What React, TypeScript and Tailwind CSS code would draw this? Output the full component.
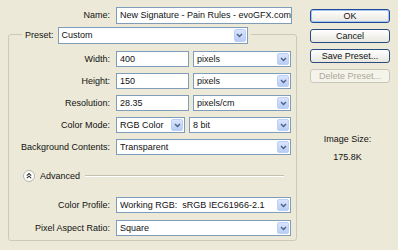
import React from 'react';

const font = { fontFamily: '"Liberation Sans", Arial, sans-serif' };

const Chevron = () => (
  <div className="w-[12px] my-[1px] mr-[1px] rounded-[2px] border border-[#bcd0f7] bg-gradient-to-b from-[#dae5fd] to-[#b8ccf5] flex items-center justify-center">
    <svg width="7" height="5" viewBox="0 0 7 5">
      <path d="M1 1 L3.5 3.5 L6 1" fill="none" stroke="#4d6185" strokeWidth="1.4" />
    </svg>
  </div>
);

const Select = ({ value, w, h = 'h-[16px]' }: { value: string; w: string; h?: string }) => (
  <div className={`${w} ${h} flex bg-white border border-[#7f9db9]`}>
    <span className="flex-1 pl-[3px] flex items-center whitespace-pre overflow-hidden">{value}</span>
    <Chevron />
  </div>
);

const Input = ({ value, w }: { value: string; w: string }) => (
  <div className={`${w} h-[16px] flex items-center pl-[3px] bg-white border border-[#7f9db9]`}>{value}</div>
);

const Row = ({ label, children, mt = 'mt-[6px]' }: { label: string; children: React.ReactNode; mt?: string }) => (
  <div className={`flex items-center ${mt}`}>
    <span className="w-[101px] text-right whitespace-nowrap">{label}</span>
    <div className="ml-[6px] flex gap-[4px]">{children}</div>
  </div>
);

const Button = ({ label, primary, disabled }: { label: string; primary?: boolean; disabled?: boolean }) => (
  <div
    className={`w-[80px] h-[14px] rounded-[3px] border flex items-center justify-center ${
      disabled
        ? 'border-[#c9c7ba] bg-[#f5f4ea] text-[#aca899]'
        : primary
        ? 'border-[#1d4a96] bg-gradient-to-b from-white to-[#e8e7df] shadow-[inset_0_0_0_1px_#a9c4f2]'
        : 'border-[#2a4b7e] bg-gradient-to-b from-white to-[#e8e7df]'
    }`}
  >
    {label}
  </div>
);

export default function App() {
  return (
    <div className="w-[398px] h-[250px] bg-[#ece9d8] text-[9px] leading-[11px] text-[#111] flex" style={font}>
      <div className="w-[305px] pl-[8px]">
        <div className="flex items-center mt-[7px] h-[17px]">
          <span className="w-[102px] text-right">Name:</span>
          <div className="ml-[6px] w-[176px] h-[17px] flex items-center pl-[3px] bg-white border border-[#7f9db9] whitespace-nowrap">
            New Signature - Pain Rules - evoGFX.com
            <span className="inline-block w-[1px] h-[10px] bg-black" />
          </div>
        </div>

        <fieldset className="w-[289px] border border-[#cbc9b9] rounded-[3px] pb-[4px]">
          <legend className="ml-[13px] px-[3px] pt-[3px]">
            <div className="flex items-center gap-[4px]">
              <span>Preset:</span>
              <Select value="Custom" w="w-[190px]" h="h-[17px]" />
            </div>
          </legend>

          <Row label="Width:" mt="mt-[7px]">
            <Input value="400" w="w-[73px]" />
            <Select value="pixels" w="w-[98px]" />
          </Row>
          <Row label="Height:">
            <Input value="150" w="w-[73px]" />
            <Select value="pixels" w="w-[98px]" />
          </Row>
          <Row label="Resolution:">
            <Input value="28.35" w="w-[73px]" />
            <Select value="pixels/cm" w="w-[98px]" />
          </Row>
          <Row label="Color Mode:">
            <Select value="RGB Color" w="w-[69px]" />
            <Select value="8 bit" w="w-[102px]" />
          </Row>
          <Row label="Background Contents:">
            <Select value="Transparent" w="w-[175px]" />
          </Row>

          <div className="flex items-center mt-[15px] h-[12px] pl-[14px] pr-[12px]">
            <svg width="12" height="12" viewBox="0 0 12 12">
              <circle cx="6" cy="6" r="5.5" fill="#fff" stroke="#b5b3a8" />
              <path d="M3.8 5.6 L6 3.6 L8.2 5.6 M3.8 8.2 L6 6.2 L8.2 8.2" fill="none" stroke="#333" strokeWidth="1.1" />
            </svg>
            <span className="ml-[5px]">Advanced</span>
            <div className="flex-1 ml-[5px] h-[2px] border-t border-[#c3c1b4] border-b border-b-white" />
          </div>

          <Row label="Color Profile:" mt="mt-[15px]">
            <Select value="Working RGB:  sRGB IEC61966-2.1" w="w-[175px]" />
          </Row>
          <Row label="Pixel Aspect Ratio:" mt="mt-[7px]">
            <Select value="Square" w="w-[175px]" />
          </Row>
        </fieldset>
      </div>

      <div className="w-[85px] flex flex-col">
        <div className="ml-[5px] mt-[9px] flex flex-col gap-[6px]">
          <Button label="OK" primary />
          <Button label="Cancel" />
          <Button label="Save Preset..." />
          <Button label="Delete Preset..." disabled />
        </div>
        <div className="mt-[51px] text-center">Image Size:</div>
        <div className="mt-[7px] text-center">175.8K</div>
      </div>
    </div>
  );
}
